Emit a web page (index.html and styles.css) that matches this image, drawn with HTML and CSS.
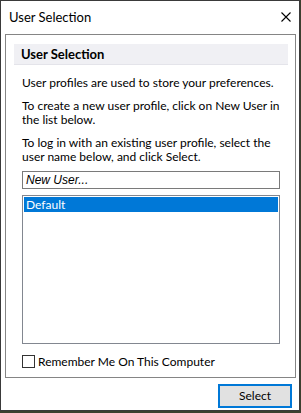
FILE: index.html
```html
<!DOCTYPE html>
<html>
<head>
<meta charset="utf-8">
<link rel="stylesheet" href="styles.css">
</head>
<body>
<div class="window">
  <div class="titlebar">
    <span class="title">User Selection</span>
    <svg class="close" width="10" height="10" viewBox="0 0 10 10"><path d="M0.5 0.5 L9.5 9.5 M9.5 0.5 L0.5 9.5" stroke="#000" stroke-width="1.1" fill="none"/></svg>
  </div>
  <div class="group">
    <div class="band">User Selection</div>
    <div class="content">
      <p class="para">User profiles are used to store your preferences.</p>
      <p class="para">To create a new user profile, click on New User in the list below.</p>
      <p class="para last">To log in with an existing user profile, select the user name below, and click Select.</p>
      <div class="field">New User...</div>
      <div class="listbox">
        <div class="item selected">Default</div>
      </div>
      <label class="check"><span class="box"></span><span>Remember Me On This Computer</span></label>
    </div>
  </div>
  <div class="footer">
    <div class="button">Select</div>
  </div>
</div>
</body>
</html>
```
FILE: styles.css
```css
html, body {
  margin: 0;
  padding: 0;
}
body {
  background: #3c4030;
  width: 301px;
  height: 413px;
  font-family: Lato, "Noto Sans", sans-serif;
  font-size: 12px;
  color: #000;
}
.window {
  box-sizing: border-box;
  width: 300px;
  height: 411px;
  background: #fff;
  border: 1px solid #3a3a3a;
  display: flex;
  flex-direction: column;
}
.titlebar {
  height: 33px;
  flex: none;
  display: flex;
  align-items: center;
  justify-content: space-between;
  padding: 0 8px 1px 8px;
  box-sizing: border-box;
}
.title {
  font-size: 13px;
}
.close {
  display: block;
}
.group {
  box-sizing: border-box;
  flex: none;
  margin-left: 4px;
  width: 291px;
  height: 344px;
  border: 1px solid #858585;
  padding: 9px 7px 0 8px;
}
.band {
  background: #f0f0f4;
  border-bottom: 1px solid #e4e4ea;
  height: 20px;
  line-height: 20px;
  padding-left: 7px;
  font-weight: bold;
  font-size: 13px;
}
.content {
  padding: 11px 8px 0 8px;
}
.para {
  margin: 0 0 9px 0;
  line-height: 14px;
}
.para.last {
  margin-bottom: 0;
}
.field {
  box-sizing: border-box;
  margin-top: 7px;
  height: 18px;
  border: 1px solid #7a7a7a;
  font-style: italic;
  line-height: 16px;
  padding-left: 3px;
  font-family: "Liberation Sans", Arial, sans-serif;
}
.listbox {
  box-sizing: border-box;
  margin-top: 6px;
  height: 149px;
  border: 1px solid #828790;
  padding: 1px;
}
.item {
  height: 15px;
  line-height: 15px;
  padding-left: 2px;
}
.selected {
  background: #0078d7;
  color: #fff;
}
.check {
  display: flex;
  align-items: center;
  margin-top: 11px;
  gap: 3px;
  height: 13px;
}
.box {
  box-sizing: border-box;
  width: 13px;
  height: 13px;
  border: 1px solid #333;
  background: #fff;
}
.footer {
  display: flex;
  justify-content: flex-end;
  padding: 6px 7px 0 0;
}
.button {
  box-sizing: border-box;
  width: 74px;
  height: 24px;
  border: 2px solid #0078d7;
  background: #e1e1e1;
  text-align: center;
  line-height: 20px;
}
```
